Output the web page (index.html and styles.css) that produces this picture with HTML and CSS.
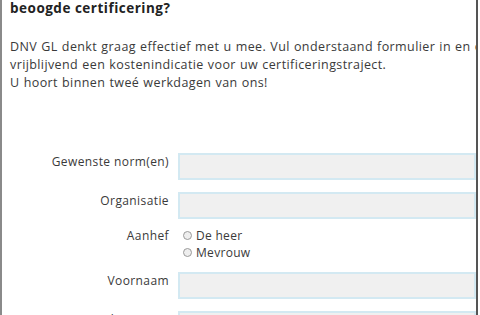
FILE: index.html
```html
<!DOCTYPE html>
<html lang="nl">
<head>
    <meta charset="UTF-8">
    <title>Offerte aanvragen</title>
    <link rel="stylesheet" href="styles.css">
</head>
<body>
    <div class="frame">
        <h2>beoogde certificering?</h2>
        <p class="intro">DNV GL denkt graag effectief met u mee. Vul onderstaand formulier in en ontvang<br>
        vrijblijvend een kostenindicatie voor uw certificeringstraject.<br>
        U hoort binnen tweé werkdagen van ons!</p>

        <form class="form">
            <div class="row">
                <label for="norm">Gewenste norm(en)</label>
                <input type="text" id="norm">
            </div>
            <div class="row">
                <label for="org">Organisatie</label>
                <input type="text" id="org">
            </div>
            <div class="row radio-row">
                <label>Aanhef</label>
                <div class="radios">
                    <span class="radio"><span class="dot"></span>De heer</span>
                    <span class="radio"><span class="dot"></span>Mevrouw</span>
                </div>
            </div>
            <div class="row">
                <label for="voornaam">Voornaam</label>
                <input type="text" id="voornaam">
            </div>
            <div class="row">
                <label for="achternaam">Achternaam</label>
                <input type="text" id="achternaam">
            </div>
        </form>
    </div>
</body>
</html>
```

FILE: styles.css
```css
body {
    margin: 0;
    background: #fff;
    font-family: 'Open Sans', sans-serif;
    color: #3a3a3a;
    overflow: hidden;
}
.frame {
    width: 474px;
    height: 315px;
    border-left: 2px solid #8a8a8a;
    border-right: 2px solid #555;
    overflow: hidden;
}
h2 {
    margin: 0;
    padding: 0 0 0 8px;
    font-size: 13.5px;
    font-weight: bold;
    line-height: 16px;
    letter-spacing: 0.5px;
    color: #222;
}
.intro {
    margin: 22px 0 0;
    padding-left: 8px;
    font-size: 12.5px;
    line-height: 18px;
    letter-spacing: 0.4px;
    word-spacing: 0.5px;
    white-space: nowrap;
}
.form {
    margin-top: 61px;
}
.row {
    display: flex;
    align-items: flex-start;
    margin-bottom: 12px;
}
.row label {
    width: 167px;
    flex: none;
    text-align: right;
    font-size: 12px;
    line-height: 17px;
    letter-spacing: 0.4px;
    margin-right: 9px;
}
.row input {
    flex: 1;
    height: 27px;
    box-sizing: border-box;
    background: #f0f0f0;
    border: 2px solid #d3e9f2;
    margin: 0;
}
.radio-row {
    margin-top: -4px;
    margin-bottom: 11px;
}
.radios {
    display: flex;
    flex-direction: column;
    padding-left: 5px;
}
.radio {
    display: flex;
    align-items: center;
    font-size: 12px;
    line-height: 17px;
    letter-spacing: 0.3px;
}
.dot {
    width: 7px;
    height: 7px;
    border: 1px solid #9a9a9a;
    border-radius: 50%;
    background: #eee;
    margin-right: 4px;
}
```
